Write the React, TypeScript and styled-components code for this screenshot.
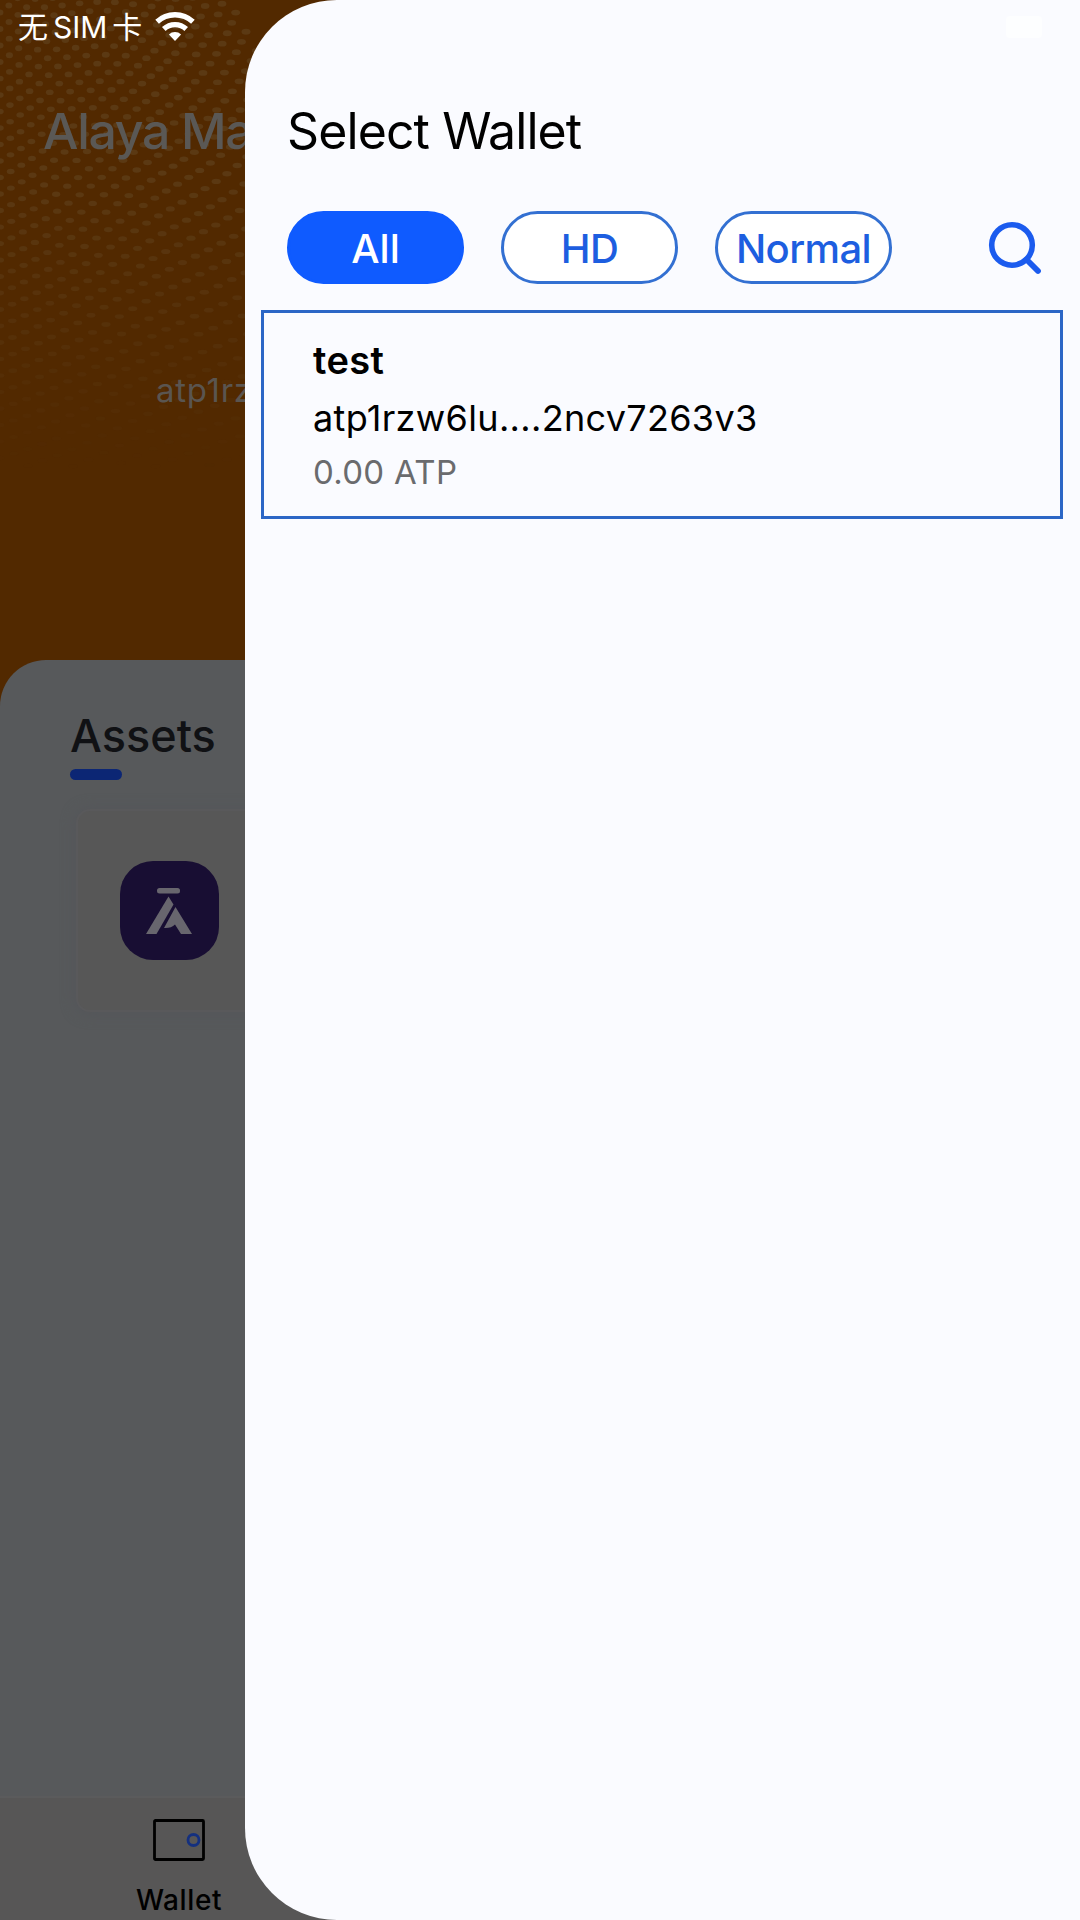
import React from "react";
import styled, { createGlobalStyle } from "styled-components";

const Global = createGlobalStyle`
  * { box-sizing: border-box; }
  body { margin: 0; background: #f9faff; }
`;

const Screen = styled.div`
  position: relative;
  width: 1080px;
  height: 1920px;
  overflow: hidden;
  font-family: Inter, "Noto Sans CJK SC", sans-serif;
  color: #000;
`;

const Text = styled.div<{ $size: number; $line: number; $weight?: number; $spacing?: number; $color?: string }>`
  font-size: ${(p) => p.$size}px;
  line-height: ${(p) => p.$line}px;
  font-weight: ${(p) => p.$weight ?? 400};
  letter-spacing: ${(p) => p.$spacing ?? 0}px;
  color: ${(p) => p.$color ?? "#000"};
  white-space: nowrap;
`;

const Home = styled.main`
  display: flex;
  flex-direction: column;
  height: 100%;
  background: #522900;
`;

const Hero = styled.header`
  position: relative;
  height: 660px;
  flex: none;
`;

const Dots = styled.svg`
  position: absolute;
  inset: 0;
`;

const HeroContent = styled.div`
  position: relative;
  display: flex;
  flex-direction: column;
  align-items: flex-start;
  gap: 203px;
  padding: 103px 0 0 43px;
`;

const Address = styled.div`
  padding-left: 113px;
`;

const Sheet = styled.section`
  flex: 1;
  background: #57595b;
  border-radius: 46px 0 0 0;
  padding: 50px 0 0 70px;
`;

const Underline = styled.div`
  width: 52px;
  height: 11px;
  margin-top: 7px;
  border-radius: 6px;
  background: #0c2674;
`;

const AssetCard = styled.article`
  display: flex;
  align-items: center;
  height: 203px;
  margin: 29px 0 0 6px;
  padding-left: 42px;
  border: 2px solid #59595b;
  border-radius: 14px;
  background: #575757;
  box-shadow: 0 1px 14px 1px #54565a;
`;

const Token = styled.div`
  width: 99px;
  height: 99px;
  border-radius: 33px;
  background: #180e33;
`;

const TabBar = styled.nav`
  display: flex;
  flex-direction: column;
  align-items: center;
  gap: 21px;
  width: 358px;
  height: 122px;
  padding-top: 20px;
`;

const HomeBottom = styled.div`
  flex: none;
  background: #575656;
  border-top: 2px solid #5b5b5c;
`;

const Drawer = styled.aside`
  position: absolute;
  top: 0;
  right: 0;
  bottom: 0;
  width: 835px;
  padding: 103px 17px 0 16px;
  border-radius: 92px 0 0 92px;
  background: #fafbff;
`;

const DrawerTitle = styled.div`
  padding-left: 26px;
`;

const Filters = styled.div`
  display: flex;
  align-items: center;
  gap: 37px;
  height: 73px;
  margin-top: 52px;
  padding: 0 18px 0 26px;
`;

const Pill = styled.button<{ $active?: boolean }>`
  display: flex;
  align-items: center;
  justify-content: center;
  width: 177px;
  height: 73px;
  padding: 3px 0 0;
  border: 3px solid ${(p) => (p.$active ? "#0f5bff" : "#3370d2")};
  border-radius: 37px;
  background: ${(p) => (p.$active ? "#0f5bff" : "#fff")};
  font-family: inherit;
`;

const SearchIcon = styled.svg`
  margin-left: auto;
  width: 60px;
  height: 60px;
`;

const WalletCard = styled.article`
  height: 209px;
  margin-top: 26px;
  padding: 24px 0 0 49px;
  border: 3px solid #2b66c6;
`;

const StatusBar = styled.div`
  position: absolute;
  top: 0;
  left: 0;
  right: 0;
  display: flex;
  align-items: center;
  gap: 13px;
  height: 54px;
  padding: 0 38px 0 18px;
`;

const Carrier = styled(Text)`
  word-spacing: -3.5px;
`;

const Battery = styled.div`
  width: 36px;
  height: 22px;
  margin-left: auto;
  border-radius: 4px;
  background: #fdfeff;
`;

type Dot = { x: number; y: number; rx: number; ry: number; o: number };

const dots: Dot[] = [];
for (let col = 0; col < 27; col++) {
  const step = 16.5 + col * 0.1;
  for (let row = 0; row < 32; row++) {
    const y = row * step + (col % 2) * (step / 2) + Math.sin(col * 0.4) * 3 - 4;
    if (y > 470) continue;
    const t = y / 400;
    const x = col * (8.8 + 4.2 * t) + col * col * 0.16 * t;
    const fade = Math.min(1, Math.max(0, (470 - y) / 300));
    dots.push({ x, y, rx: 3.4 + 1.1 * t + col * 0.04, ry: 3 - 0.7 * t, o: fade * 0.85 });
  }
}

export default function App() {
  return (
    <Screen>
      <Global />
      <Home>
        <Hero>
          <Dots width="350" height="480">
            {dots.map((d, i) => (
              <ellipse key={i} cx={d.x} cy={d.y} rx={d.rx} ry={d.ry} fill="#5d3c16" opacity={d.o} />
            ))}
          </Dots>
          <HeroContent>
            <Text $size={50} $line={56} $weight={500} $spacing={-1.3} $color="#5a5855">Alaya Ma</Text>
            <Address>
              <Text $size={33} $line={56} $spacing={0.7} $color="#5a5550">atp1rz</Text>
            </Address>
          </HeroContent>
        </Hero>
        <Sheet>
          <Text $size={45} $line={52} $weight={500} $color="#101114">Assets</Text>
          <Underline />
          <AssetCard>
            <Token>
              <svg width="99" height="99" viewBox="0 0 99 99" fill="#68666e">
                <rect x="37" y="27" width="23" height="5.5" rx="2.5" />
                <path d="M48.5 35.5 53.5 43.5 36.5 73H26Z" />
                <path d="M55.5 46 72 73H61L55 63.5Q51 67.5 44 67Z" />
              </svg>
            </Token>
          </AssetCard>
        </Sheet>
        <HomeBottom>
          <TabBar>
            <svg width="54" height="44" viewBox="0 0 54 44" fill="none">
              <rect x="2.5" y="2.5" width="49" height="39" rx="1" stroke="#000" strokeWidth="2.8" />
              <circle cx="41.5" cy="22" r="5.5" stroke="#14307f" strokeWidth="2.8" />
            </svg>
            <Text $size={28} $line={34} $weight={500} $spacing={0.6}>Wallet</Text>
          </TabBar>
        </HomeBottom>
      </Home>

      <Drawer>
        <DrawerTitle>
          <Text $size={50} $line={56} $spacing={-0.9}>Select Wallet</Text>
        </DrawerTitle>
        <Filters>
          <Pill $active><Text $size={40} $line={48} $weight={500} $color="#fff">All</Text></Pill>
          <Pill><Text $size={40} $line={48} $weight={500} $spacing={-0.6} $color="#1d5ee0">HD</Text></Pill>
          <Pill><Text $size={40} $line={48} $weight={500} $spacing={-0.6} $color="#1d5ee0">Normal</Text></Pill>
          <SearchIcon viewBox="0 0 60 60" fill="none" stroke="#1b5bee" strokeLinecap="round">
            <circle cx="27" cy="27" r="20.3" strokeWidth="5.6" />
            <path d="M41.5 41.5 53 53" strokeWidth="5.8" />
          </SearchIcon>
        </Filters>
        <WalletCard>
          <Text $size={38} $line={46} $weight={600} $spacing={0.4}>test</Text>
          <Text $size={36} $line={70} $spacing={0.32}>atp1rzw6lu....2ncv7263v3</Text>
          <Text $size={33} $line={38} $spacing={0.3} $color="#6a6b6e">0.00 ATP</Text>
        </WalletCard>
      </Drawer>

      <StatusBar>
        <Carrier $size={30} $line={54} $color="#fff">无 SIM 卡</Carrier>
        <svg width="40" height="30" viewBox="0 0 40 30" fill="none" stroke="#fff" strokeWidth="5.3">
          <path d="M2.1 9.8A26.2 26.2 0 0 1 37.9 9.8" />
          <path d="M8.8 17A16.4 16.4 0 0 1 31.2 17" />
          <path d="M20 29 13.9 22.4A9 9 0 0 1 26.1 22.4Z" fill="#fff" stroke="none" />
        </svg>
        <Battery />
      </StatusBar>
    </Screen>
  );
}
